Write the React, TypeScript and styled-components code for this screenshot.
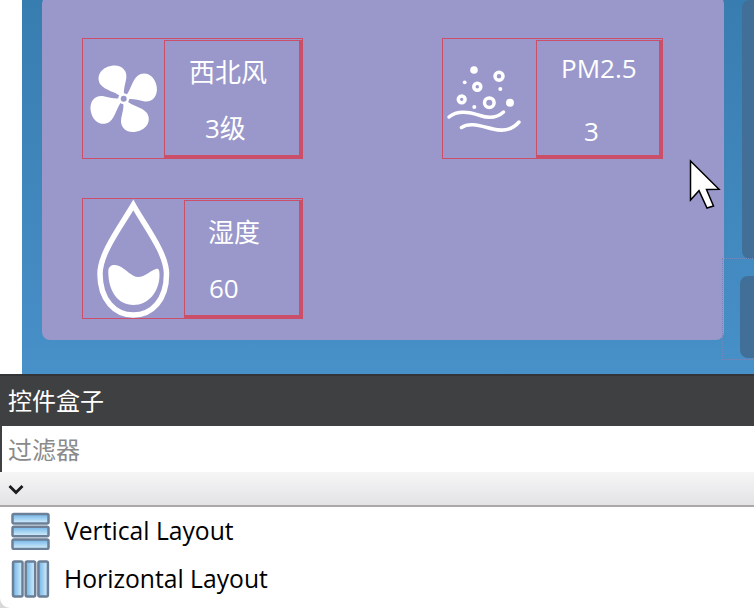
import * as React from 'react'
import styled, { createGlobalStyle } from 'styled-components'

const red = '#cb4f68'
const latin = '"Open Sans", "Noto Sans CJK SC", sans-serif'

const Global = createGlobalStyle`
  html, body { margin: 0; padding: 0; background: #fff; overflow: hidden; }
  #root { width: 754px; height: 608px; }
`

const Page = styled.div`
  position: relative;
  width: 754px;
  height: 608px;
  display: flex;
  flex-direction: column;
  overflow: hidden;
  background: #d8d8d8;
  font-family: ${latin};
`

const Designer = styled.div`
  flex: 0 0 374px;
  display: flex;
  background: #fff;
  overflow: hidden;
`

const Workspace = styled.div`
  position: relative;
  margin-left: 22px;
  flex: 1;
  display: flex;
  align-items: flex-start;
  gap: 16px;
  padding-left: 20px;
  background: linear-gradient(180deg, #387db0 0%, #4790c8 100%);
`

const WeatherPanel = styled.div`
  flex: 0 0 682px;
  box-sizing: border-box;
  height: 344px;
  margin-top: -4px;
  padding: 42px 0 0 40px;
  border-radius: 8px;
  background: #9a98ca;
  display: grid;
  grid-template-columns: 221px 221px;
  grid-auto-rows: 121px;
  column-gap: 139px;
  row-gap: 39px;
`

const Card = styled.div`
  box-sizing: border-box;
  display: flex;
  border: 1px solid ${red};
  padding-top: 1px;
  color: #fff;
`

const IconCell = styled.div<{ $w: number }>`
  flex: 0 0 ${p => p.$w}px;
  margin-top: -1px;
  svg { display: block; }
`

const TextCell = styled.div`
  flex: 1;
  box-sizing: border-box;
  border-style: solid;
  border-color: ${red};
  border-width: 1px 3px 3px 1px;
  display: flex;
  flex-direction: column;
`

const Line = styled.div<{ $left: number; $top: number }>`
  height: 36px;
  line-height: 36px;
  font-size: 26px;
  white-space: nowrap;
  margin-left: ${p => p.$left}px;
  margin-top: ${p => p.$top}px;
`

const Rail = styled.div`
  flex: 1;
  display: flex;
  flex-direction: column;
  gap: 17px;
`

const RailBlock = styled.div<{ $h: number; $inset: number }>`
  height: ${p => p.$h}px;
  margin-left: ${p => p.$inset}px;
  background: #426f98;
  border-radius: 8px 0 0 8px;
`

const DropZone = styled.div`
  position: absolute;
  left: 700px;
  top: 258px;
  width: 40px;
  height: 100px;
  border: 1px dotted #7288b8;
  border-right: none;
`

const BoxHeader = styled.div`
  flex: 0 0 50px;
  border-top: 2px solid #333436;
  background: #3f4042;
  color: #fff;
  font-size: 24px;
  line-height: 50px;
  padding-left: 8px;
`

const FilterRow = styled.div`
  flex: 0 0 46px;
  display: flex;
  border-left: 2px solid #3f4042;
  background: #fff;
`

const FilterInput = styled.input`
  flex: 1;
  min-width: 0;
  border: none;
  outline: none;
  padding: 0 0 0 6px;
  background: transparent;
  font-family: ${latin};
  font-size: 24px;
  &::placeholder { color: #8a8a8a; opacity: 1; }
`

const Toolbar = styled.div`
  flex: 0 0 33px;
  display: flex;
  align-items: center;
  padding-left: 8px;
  background: linear-gradient(180deg, #f6f6f6 0%, #e3e3e6 100%);
  border-bottom: 2px solid #aaa8a8;
`

const WidgetList = styled.div`
  flex: 1;
  background: #fff;
  border-bottom-left-radius: 10px;
`

const WidgetRow = styled.div`
  display: flex;
  align-items: center;
  height: 48px;
  margin-top: -1px;
  margin-bottom: 1px;
  padding-left: 11px;
  gap: 14px;
  color: #000;
  font-size: 24.7px;
  svg { filter: blur(0.4px); margin-top: 2px; }
`

const Cursor = styled.svg`
  position: absolute;
  left: 688px;
  top: 158px;
`

const FanIcon = () => {
  const blade =
    'M-3 -2C-8 -7 -18 -8 -23 -14C-28 -21 -24 -31 -12 -33C-2 -34.500 4 -28 2.500 -20C1.500 -14 -1 -8 1 -2Z'
  return (
    <svg width="81" height="120" viewBox="83 38 81 120">
      <g transform="translate(123.7 97.7)" fill="#fff">
        {[0, 90, 180, 270].map(r => (
          <path key={r} d={blade} transform={`rotate(${r})`} />
        ))}
        <circle r="5.500" />
        <circle r="3" fill="#9a98ca" />
      </g>
    </svg>
  )
}

const ParticleIcon = () => (
  <svg width="93" height="120" viewBox="443 38 93 120">
    <g fill="#fff">
      <circle cx="474" cy="69" r="3.8" />
      <circle cx="464.7" cy="81.3" r="1.9" />
      <circle cx="500.3" cy="88" r="2" />
      <circle cx="510" cy="101.7" r="4" />
      <circle cx="474.3" cy="106" r="2" />
    </g>
    <g fill="none" stroke="#fff" strokeWidth="3.500">
      <circle cx="499" cy="75.3" r="4" />
      <circle cx="477.3" cy="85.7" r="3.500" />
      <circle cx="461.7" cy="98.3" r="3.400" />
      <circle cx="489.3" cy="101.7" r="4.800" />
      <path
        d="M449 116C457 109 470 111 480 114.500C490 118 497 117 503.500 111"
        strokeLinecap="round"
      />
      <path
        d="M461.500 126.500C470 121 480 125 493 128C505 131 513 128 519 121"
        strokeLinecap="round"
      />
    </g>
  </svg>
)

const DropIcon = () => (
  <svg width="101" height="120" viewBox="83 198 101 120">
    <path
      d="M133.300 204C121 225 100 252 100 273C100 299 115 314 133.300 314C152 314 166.500 299 166.500 273C166.500 252 145 225 133.300 204Z"
      fill="none"
      stroke="#fff"
      strokeWidth="5.500"
    />
    <path
      d="M108.300 270C108.500 264 114 263 119 265C126 268 132 276 138 276C145 276 151 269 156 268C159 267 159.500 270 159.500 274C159.500 291 148 304 133.500 304C118 304 108 290 108.300 270Z"
      fill="#fff"
    />
  </svg>
)

const Bars = ({ vertical }: { vertical: boolean }) => {
  const id = vertical ? 'barV' : 'barH'
  return (
    <svg width="39" height="38" viewBox="0 0 39 38">
      <defs>
        <linearGradient
          id={id}
          x1="0"
          y1="0"
          x2={vertical ? '0' : '1'}
          y2={vertical ? '1' : '0'}
        >
          <stop offset="0" stopColor="#6fb3e6" />
          <stop offset="1" stopColor="#d8f0fd" />
        </linearGradient>
      </defs>
      {[0, 1, 2].map(i =>
        vertical ? (
          <rect
            key={i}
            x="1.500"
            y={2 + i * 12.7}
            width="36"
            height="9.500"
            rx="1.500"
            fill={`url(#${id})`}
            stroke="#6b7f96"
            strokeWidth="2.500"
          />
        ) : (
          <rect
            key={i}
            x={2 + i * 12.7}
            y="1.500"
            width="9.500"
            height="35"
            rx="1.500"
            fill={`url(#${id})`}
            stroke="#6b7f96"
            strokeWidth="2.500"
          />
        )
      )}
    </svg>
  )
}

const App = () => (
  <Page>
    <Global />
    <Designer>
      <Workspace>
        <WeatherPanel>
          <Card>
            <IconCell $w={81}>
              <FanIcon />
            </IconCell>
            <TextCell>
              <Line $left={24} $top={13}>
                西北风
              </Line>
              <Line $left={40} $top={20}>
                3级
              </Line>
            </TextCell>
          </Card>
          <Card>
            <IconCell $w={93}>
              <ParticleIcon />
            </IconCell>
            <TextCell>
              <Line $left={24} $top={9}>
                PM2.5
              </Line>
              <Line $left={47} $top={27}>
                3
              </Line>
            </TextCell>
          </Card>
          <Card>
            <IconCell $w={101}>
              <DropIcon />
            </IconCell>
            <TextCell>
              <Line $left={23} $top={13}>
                湿度
              </Line>
              <Line $left={24} $top={20}>
                60
              </Line>
            </TextCell>
          </Card>
        </WeatherPanel>
        <Rail>
          <RailBlock $h={259} $inset={2} />
          <RailBlock $h={82} $inset={0} />
        </Rail>
        <DropZone />
      </Workspace>
    </Designer>
    <BoxHeader>控件盒子</BoxHeader>
    <FilterRow>
      <FilterInput placeholder="过滤器" readOnly />
    </FilterRow>
    <Toolbar>
      <svg width="16" height="12" viewBox="0 0 16 12">
        <path
          d="M1.500 3L8 9.500L14.500 3"
          fill="none"
          stroke="#1a1a1a"
          strokeWidth="2.800"
        />
      </svg>
    </Toolbar>
    <WidgetList>
      <WidgetRow>
        <Bars vertical />
        Vertical Layout
      </WidgetRow>
      <WidgetRow>
        <Bars vertical={false} />
        Horizontal Layout
      </WidgetRow>
    </WidgetList>
    <Cursor width="34" height="52" viewBox="688 158 34 52">
      <path
        d="M690.500 161L719 189.300L706.500 189.500L713.500 206L707 208L699 190.700L690.500 200Z"
        fill="#fff"
        stroke="#000"
        strokeWidth="1.500"
      />
    </Cursor>
  </Page>
)

export default App
